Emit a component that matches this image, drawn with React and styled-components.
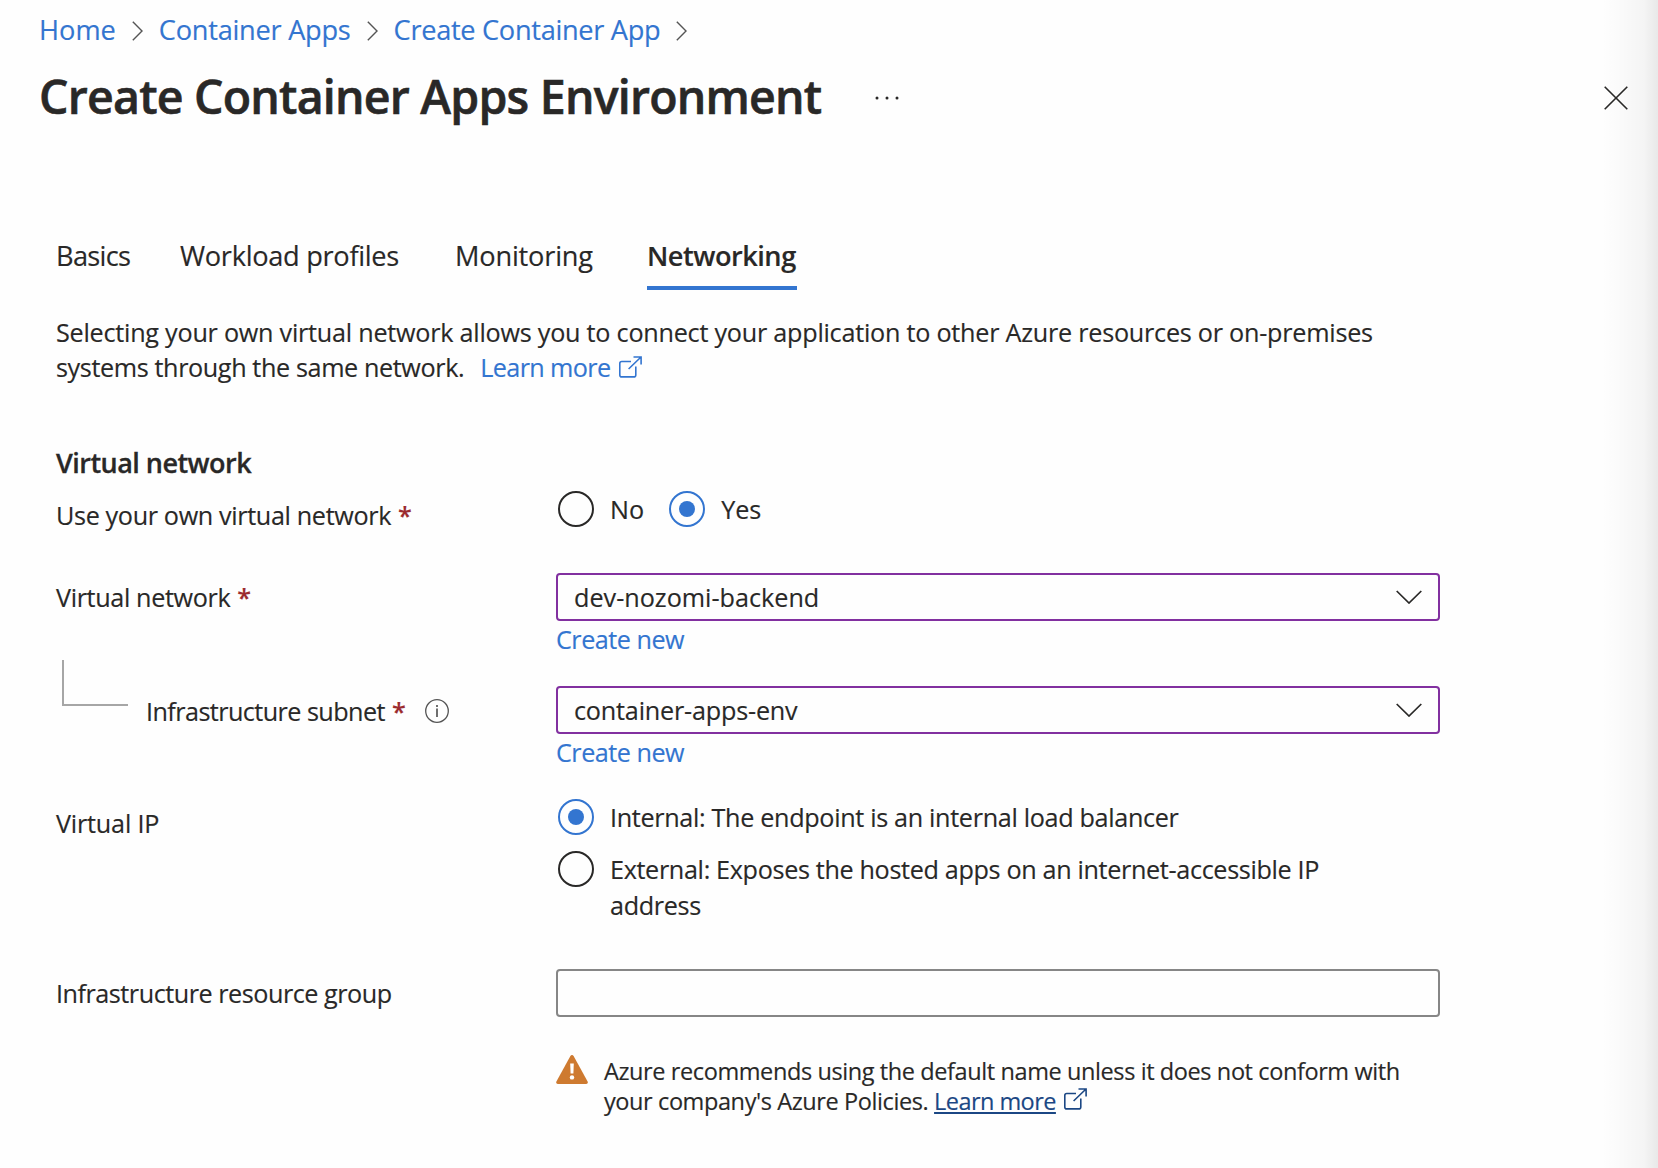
import React, { Fragment } from "react";
import styled, { createGlobalStyle } from "styled-components";

const ink = "#292827";
const blue = "#3375d0";
const navy = "#1b4784";
const purple = "#8230a0";

const GlobalStyle = createGlobalStyle`
  *, *::before, *::after { box-sizing: border-box; }
  body { margin: 0; background: #fefefe; overflow: hidden; }
`;

const Page = styled.main`
  position: relative;
  height: 1168px;
  padding-top: 12px;
  overflow: hidden;
  background: #fefefe;
  color: ${ink};
  font-family: "Open Sans", "Noto Sans", sans-serif;
  font-size: 25.2px;
  line-height: 36px;
  white-space: nowrap;
  -webkit-text-stroke: 0.15px currentColor;
`;

const EdgeShadow = styled.div`
  position: absolute;
  inset: 0 0 0 auto;
  width: 56px;
  background: linear-gradient(to right, rgba(0, 0, 0, 0), rgba(0, 0, 0, 0.015) 35%, rgba(0, 0, 0, 0.04) 75%, rgba(0, 0, 0, 0.085));
  pointer-events: none;
`;

const Text = styled.span`
  letter-spacing: ${(p) => p.$track || 0}px;
`;

const Breadcrumb = styled.nav`
  display: flex;
  align-items: center;
  padding-left: 39px;
  font-size: 27.2px;
  svg { margin: 1px 16px 0; }
`;

const Link = styled.a`
  color: ${blue};
  letter-spacing: ${(p) => p.$track || 0}px;
  text-decoration: none;
`;

const TitleBar = styled.header`
  display: flex;
  align-items: center;
  height: 64px;
  margin-top: 16px;
  padding: 0 30px 0 39px;
`;

const Title = styled.h1`
  margin: 0;
  font-size: 46.5px;
  font-weight: 650;
  line-height: 64px;
  letter-spacing: -0.79px;
  -webkit-text-stroke: 0.6px currentColor;
`;

const IconButton = styled.button`
  display: flex;
  margin: ${(p) => p.$margin};
  padding: 0;
  border: 0;
  background: none;
  color: ${ink};
`;

const Tabs = styled.nav`
  display: grid;
  grid-template-columns: 124px 275px 192px 150px;
  height: 52px;
  margin: 110px 0 0 56px;
  font-size: 27.2px;
`;

const Tab = styled.a`
  border-bottom: 4px solid ${(p) => (p.$active ? blue : "transparent")};
  font-weight: ${(p) => (p.$active ? 650 : 400)};
  letter-spacing: ${(p) => p.$track}px;
`;

const Intro = styled.p`
  margin: 25px 0 0 56px;
  line-height: 35px;
  svg { margin-left: 8px; vertical-align: -1px; }
`;

const IntroLink = styled(Link)`
  margin-left: 16px;
`;

const Form = styled.section`
  width: 1384px;
  margin: 60px 0 0 56px;
`;

const SectionTitle = styled.h2`
  margin: 0;
  font-size: 27px;
  font-weight: 650;
  line-height: 36px;
  letter-spacing: -0.53px;
  -webkit-text-stroke: 0.3px currentColor;
`;

const Row = styled.div`
  display: grid;
  grid-template-columns: 500px 884px;
  margin-top: ${(p) => p.$gap}px;
`;

const Label = styled.label`
  display: flex;
  height: 36px;
  margin-top: ${(p) => p.$drop || 6}px;
  letter-spacing: ${(p) => p.$track}px;
`;

const Required = styled.span`
  margin-left: 7px;
  color: #9b2b2e;
  font-weight: 600;
`;

const Elbow = styled.span`
  width: 66px;
  height: 46px;
  margin: -33px 18px 0 6px;
  border: solid #a6a6a6;
  border-width: 0 0 2px 2px;
`;

const InfoIcon = styled.svg`
  margin: 6px 0 0 20px;
`;

const Field = styled.div`
  display: flex;
  flex-direction: column;
  align-items: flex-start;
`;

const Select = styled.div`
  display: flex;
  justify-content: space-between;
  align-items: center;
  width: 100%;
  height: 48px;
  padding: 0 16px;
  border: 2px solid ${purple};
  border-radius: 4px;
`;

const Input = styled.input`
  width: 100%;
  height: 48px;
  border: 2px solid #868686;
  border-radius: 4px;
  background: transparent;
`;

const RadioGroup = styled.div`
  display: flex;
  flex-direction: ${(p) => (p.$stacked ? "column" : "row")};
  gap: ${(p) => (p.$stacked ? 16 : 25)}px;
  padding-left: 2px;
`;

const Option = styled.div`
  display: flex;
  gap: 16px;
`;

const RadioMark = styled.span`
  display: grid;
  place-items: center;
  flex: none;
  width: 36px;
  height: 36px;
  border: 2px solid ${(p) => (p.$checked ? blue : ink)};
  border-radius: 50%;
  &::after {
    content: "";
    width: 16px;
    height: 16px;
    border-radius: 50%;
    background: ${(p) => (p.$checked ? blue : "transparent")};
  }
`;

const Note = styled.div`
  display: flex;
  gap: 16px;
  margin: 39px 0 0 500px;
  font-size: 23.5px;
  line-height: 30px;
  letter-spacing: -0.4px;
`;

const NoteLink = styled.a`
  color: ${navy};
  letter-spacing: -0.55px;
  text-decoration: underline;
  text-decoration-thickness: 2px;
  text-underline-offset: 2px;
  text-decoration-skip-ink: none;
`;

const NoteText = styled.div`
  svg { margin-left: 8px; vertical-align: 0; }
`;

const WarningIcon = styled.svg`
  margin-top: -1px;
`;

const Crumb = () => (
  <svg width="11" height="20" viewBox="0 0 11 20" fill="none" stroke="#555" strokeWidth="1.4">
    <path d="M.8.8 10 10 .8 19.2" />
  </svg>
);

const Chevron = () => (
  <svg width="26" height="14" viewBox="0 0 26 14" fill="none" stroke={ink} strokeWidth="1.7">
    <path d="M.7 1 13 13 25.3 1" />
  </svg>
);

const External = ({ color }) => (
  <svg width="23" height="22" viewBox="0 0 23 22" fill="none" stroke={color} strokeWidth="1.6">
    <path d="M12 5.5H2.8a2 2 0 0 0-2 2v11.400a2 2 0 0 0 2 2h12a2 2 0 0 0 2-2V10.500" />
    <path d="M14.500 1h7.600v7.500M22 1 9.600 13" />
  </svg>
);

const Radio = ({ checked, track, children }) => (
  <Option>
    <RadioMark $checked={checked} />
    <Text $track={track}>{children}</Text>
  </Option>
);

const crumbs = [
  ["Home", 0],
  ["Container Apps", -0.26],
  ["Create Container App", -0.31],
];

const tabs = [
  ["Basics", -0.68],
  ["Workload profiles", -0.3],
  ["Monitoring", -0.19],
  ["Networking", -0.5, true],
];

export default function App() {
  return (
    <Page>
      <GlobalStyle />
      <Breadcrumb>
        {crumbs.map(([name, track]) => (
          <Fragment key={name}>
            <Link $track={track}>{name}</Link>
            <Crumb />
          </Fragment>
        ))}
      </Breadcrumb>
      <TitleBar>
        <Title>Create Container Apps Environment</Title>
        <IconButton $margin="4px 0 0 54px" aria-label="More">
          <svg width="24" height="4" viewBox="0 0 24 4" fill={ink}>
            <circle cx="2" cy="2" r="1.5" />
            <circle cx="12" cy="2" r="1.5" />
            <circle cx="22" cy="2" r="1.5" />
          </svg>
        </IconButton>
        <IconButton $margin="4px 0 0 auto" aria-label="Close">
          <svg width="24" height="24" viewBox="0 0 24 24" stroke={ink} strokeWidth="1.6">
            <path d="M.7.7l22.600 22.600M23.300.7.7 23.300" />
          </svg>
        </IconButton>
      </TitleBar>
      <Tabs>
        {tabs.map(([name, track, active]) => (
          <Tab key={name} $track={track} $active={active}>{name}</Tab>
        ))}
      </Tabs>
      <Intro>
        <Text $track={-0.243}>
          Selecting your own virtual network allows you to connect your application to other Azure resources or on-premises
        </Text>
        <br />
        <Text $track={-0.39}>systems through the same network.</Text>
        <IntroLink $track={-0.62}>Learn more</IntroLink>
        <External color={blue} />
      </Intro>
      <Form>
        <SectionTitle>Virtual network</SectionTitle>
        <Row $gap={10}>
          <Label $track={-0.36}>Use your own virtual network<Required>*</Required></Label>
          <RadioGroup>
            <Radio>No</Radio>
            <Radio checked>Yes</Radio>
          </RadioGroup>
        </Row>
        <Row $gap={40}>
          <Label $track={-0.36}>Virtual network<Required>*</Required></Label>
          <Field>
            <Select><Text>dev-nozomi-backend</Text><Chevron /></Select>
            <Link $track={-0.5}>Create new</Link>
          </Field>
        </Row>
        <Row $gap={29}>
          <Label $drop={7} $track={-0.57}>
            <Elbow />
            Infrastructure subnet<Required>*</Required>
            <InfoIcon width="24" height="24" viewBox="0 0 24 24" fill="none" stroke="#555">
              <circle cx="12" cy="12" r="11.300" strokeWidth="1.3" />
              <path d="M12 9.500v8.500" strokeWidth="1.7" />
              <path d="M12 6v2" strokeWidth="1.7" />
            </InfoIcon>
          </Label>
          <Field>
            <Select><Text $track={-0.2}>container-apps-env</Text><Chevron /></Select>
            <Link $track={-0.5}>Create new</Link>
          </Field>
        </Row>
        <Row $gap={29}>
          <Label $track={-0.2}>Virtual IP</Label>
          <RadioGroup $stacked>
            <Radio checked track={-0.33}>Internal: The endpoint is an internal load balancer</Radio>
            <Radio track={-0.345}>
              External: Exposes the hosted apps on an internet-accessible IP
              <br />
              address
            </Radio>
          </RadioGroup>
        </Row>
        <Row $gap={46}>
          <Label $track={-0.48}>Infrastructure resource group</Label>
          <Input />
        </Row>
        <Note>
          <WarningIcon width="32" height="30" viewBox="0 0 32 30">
            <path d="M14.400 1a1.900 1.900 0 0 1 3.200 0L31.600 26.600a1.700 1.700 0 0 1-1.500 2.500H1.900a1.700 1.700 0 0 1-1.500-2.500Z" fill="#ce7a30" />
            <path d="M14.200 8.500h3.600l-.4 10h-2.800Z" fill="#fff" />
            <circle cx="16" cy="22.400" r="2.200" fill="#fff" />
          </WarningIcon>
          <NoteText>
            Azure recommends using the default name unless it does not conform with
            <br />
            your company's Azure Policies. <NoteLink>Learn more</NoteLink>
            <External color={navy} />
          </NoteText>
        </Note>
      </Form>
      <EdgeShadow />
    </Page>
  );
}
